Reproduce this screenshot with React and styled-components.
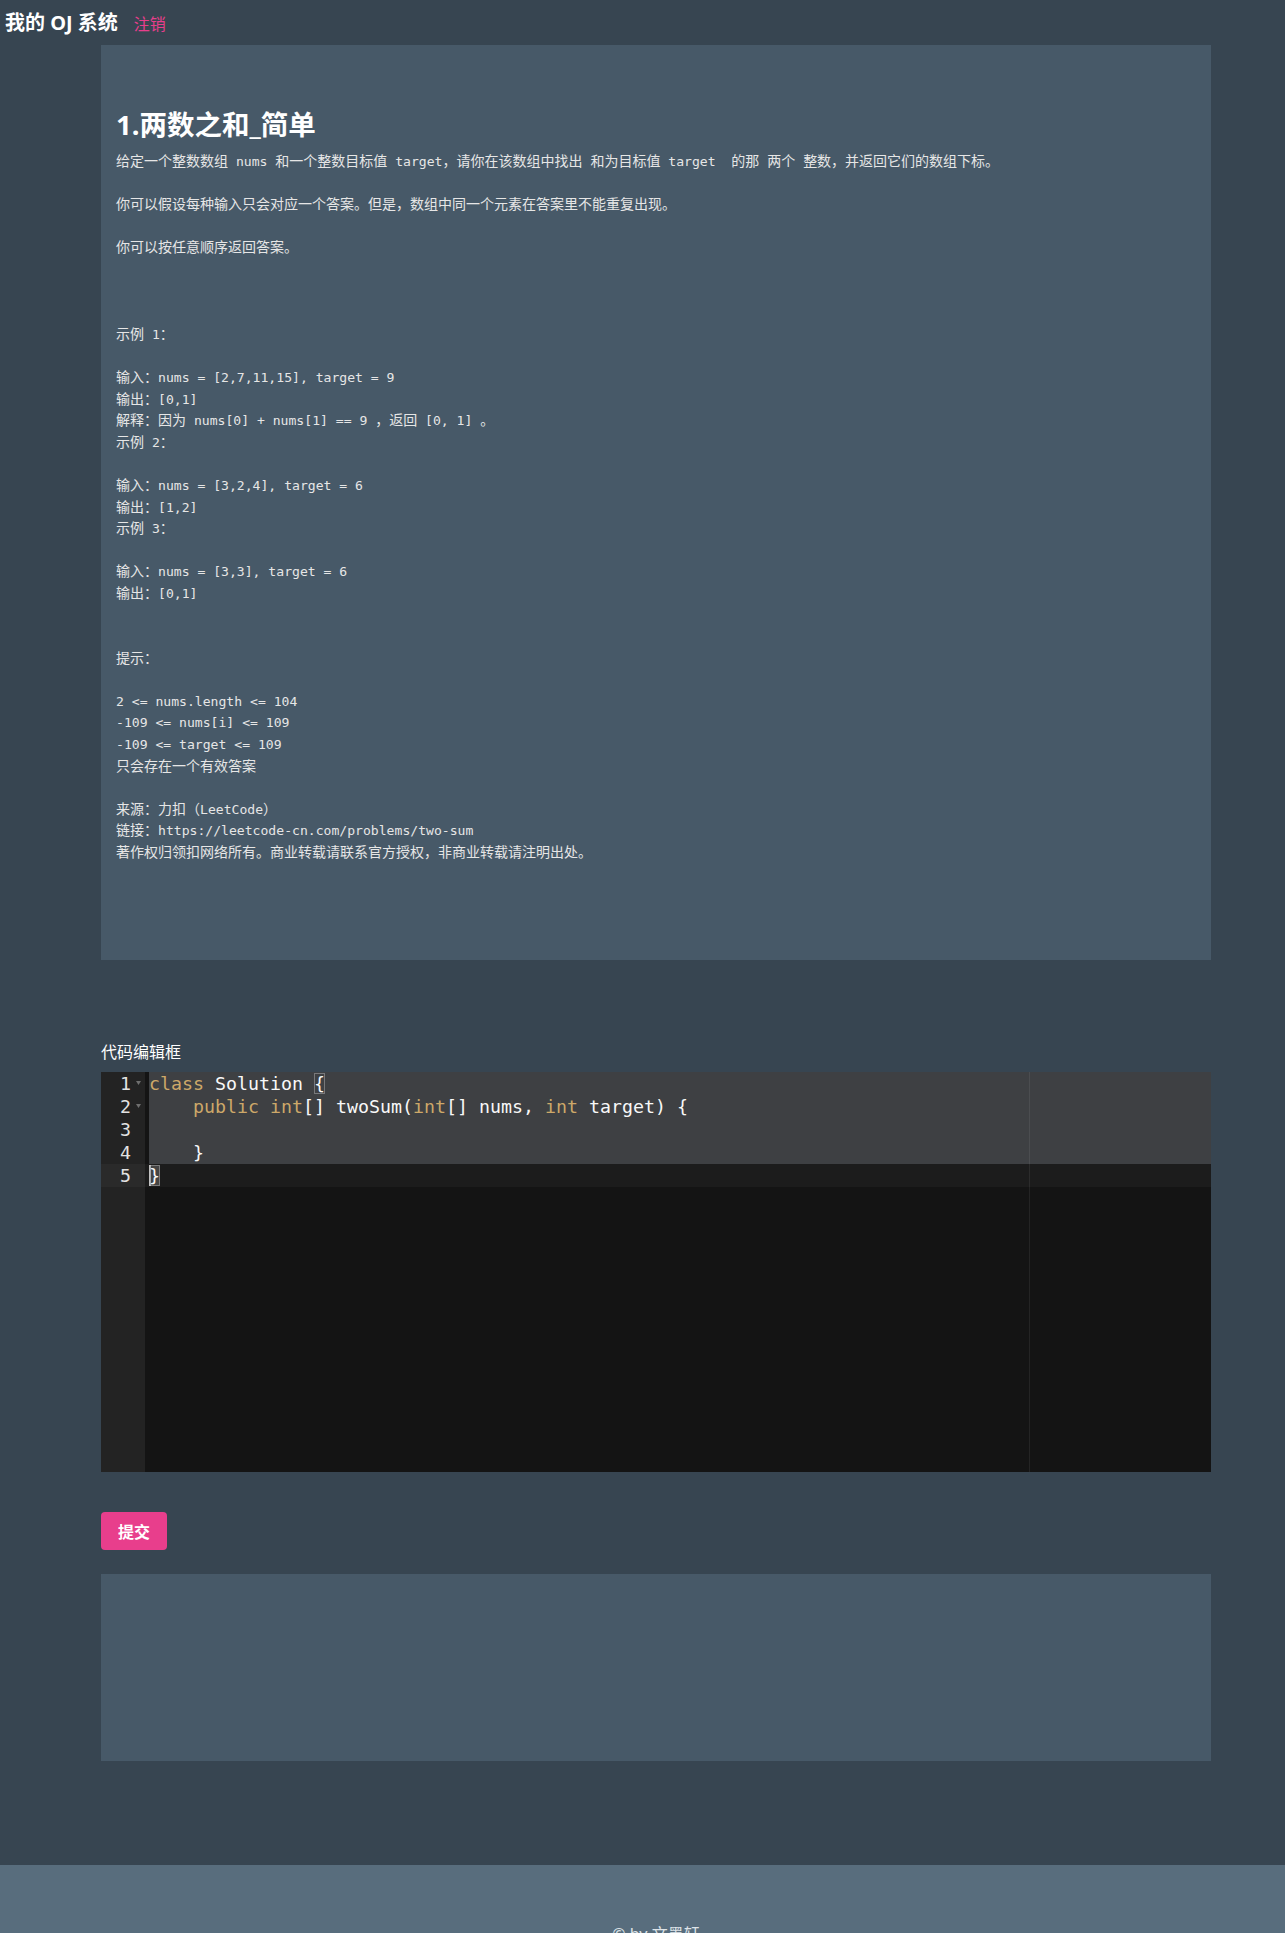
import React from "react";
import styled, { createGlobalStyle } from "styled-components";

const GlobalStyle = createGlobalStyle`
  body {
    margin: 0;
    background: #374551;
    font-family: "Noto Sans", "Noto Sans CJK SC", sans-serif;
  }
`;

const problemText = `给定一个整数数组 nums 和一个整数目标值 target，请你在该数组中找出 和为目标值 target  的那 两个 整数，并返回它们的数组下标。

你可以假设每种输入只会对应一个答案。但是，数组中同一个元素在答案里不能重复出现。

你可以按任意顺序返回答案。



示例 1：

输入：nums = [2,7,11,15], target = 9
输出：[0,1]
解释：因为 nums[0] + nums[1] == 9 ，返回 [0, 1] 。
示例 2：

输入：nums = [3,2,4], target = 6
输出：[1,2]
示例 3：

输入：nums = [3,3], target = 6
输出：[0,1]


提示：

2 <= nums.length <= 104
-109 <= nums[i] <= 109
-109 <= target <= 109
只会存在一个有效答案

来源：力扣（LeetCode）
链接：https://leetcode-cn.com/problems/two-sum
著作权归领扣网络所有。商业转载请联系官方授权，非商业转载请注明出处。`;

const codeLines = [
  [["kw", "class"], ["tx", " Solution "], ["br", "{"]],
  [["tx", "    "], ["kw", "public"], ["tx", " "], ["kw", "int"], ["tx", "[] twoSum("], ["kw", "int"], ["tx", "[] nums, "], ["kw", "int"], ["tx", " target) {"]],
  [],
  [["tx", "    }"]],
  [["cur", "}"]],
];

const Nav = styled.header`
  height: 45px;
  display: flex;
  align-items: center;
  gap: 16px;
  padding: 0 5px;
`;

const Brand = styled.h1`
  margin: 0;
  font-size: 20px;
  font-weight: 700;
  line-height: 1;
  color: #fff;
`;

const Logout = styled.a`
  color: #e83e8c;
  font-size: 16px;
  text-decoration: none;
`;

const Main = styled.main`
  width: 1110px;
  margin-left: 101px;
`;

const Panel = styled.section`
  background: #475968;
  padding: ${(p) => (p.empty ? "0" : "61px 15px 97px")};
  height: ${(p) => (p.empty ? "187px" : "auto")};
  margin-top: ${(p) => (p.empty ? "24px" : "0")};
`;

const Title = styled.h2`
  margin: 0 0 6px;
  font-size: 27.5px;
  font-weight: 700;
  line-height: 38px;
  color: #fff;
`;

const Desc = styled.div`
  color: #e6e6e6;
  font-size: 14px;
`;

const DescLine = styled.div`
  height: 21.6px;
  line-height: 21.6px;
  white-space: pre;
`;

const Mono = styled.span`
  font-family: "DejaVu Sans Mono", monospace;
  font-size: 13.1px;
  line-height: 1;
`;

const Label = styled.div`
  margin: 80px 0 8px;
  line-height: 24px;
  font-size: 16px;
  color: #fff;
`;

const Editor = styled.div`
  display: flex;
  height: 400px;
  background: #141414;
  font-family: "DejaVu Sans Mono", monospace;
  font-size: 18.27px;
  line-height: 23px;
`;

const Gutter = styled.div`
  width: 44px;
  background: #232323;
  color: #e2e2e2;
`;

const GutterCell = styled.div`
  display: flex;
  justify-content: flex-end;
  align-items: center;
  height: 23px;
  padding-right: 4px;
  background: ${(p) => (p.active ? "#2a2a2a" : "transparent")};
`;

const Fold = styled.span`
  width: 5px;
  margin-left: 5px;
  display: flex;
  justify-content: center;
`;

const Content = styled.div`
  flex: 1;
  position: relative;
`;

const PrintMargin = styled.div`
  position: absolute;
  top: 0;
  bottom: 0;
  left: 884px;
  width: 1px;
  background: rgba(255, 255, 255, 0.07);
  z-index: 1;
`;

const CodeLine = styled.div`
  height: 23px;
  padding-left: 4px;
  white-space: pre;
  color: #f8f8f8;
  background: ${(p) =>
    p.selected
      ? "linear-gradient(to right, transparent 4px, #3e4043 4px)"
      : p.active
      ? "#1c1c1c"
      : "transparent"};
`;

const Tok = styled.span`
  color: ${(p) => (p.kind === "kw" ? "#cda869" : "#f8f8f8")};
  ${(p) =>
    p.kind === "br" &&
    "outline: 1px solid rgba(255,255,255,0.3); outline-offset: -1px;"}
  ${(p) =>
    p.kind === "cur" &&
    "background: rgba(255,255,255,0.18); outline: 1px solid rgba(255,255,255,0.3); outline-offset: -1px; box-shadow: inset 2px 0 0 #a7a7a7;"}
`;

const SubmitButton = styled.button`
  display: block;
  margin-top: 40px;
  width: 66px;
  height: 38px;
  border: none;
  border-radius: 4px;
  background: #e83e8c;
  color: #fff;
  font-family: "Noto Sans", "Noto Sans CJK SC", sans-serif;
  font-size: 16px;
  font-weight: 700;
  cursor: pointer;
`;

const Footer = styled.footer`
  margin-top: 104px;
  background: #586d7d;
  padding: 57px 0 40px 27px;
  text-align: center;
  color: #dde3e8;
  font-size: 16px;
  line-height: 24px;
`;

const mixed = (line) =>
  line
    .split(/([\x20-\x7e]+)/)
    .filter(Boolean)
    .map((part, i) =>
      /^[\x20-\x7e]+$/.test(part) ? <Mono key={i}>{part}</Mono> : part
    );

const FoldArrow = () => (
  <svg width="5" height="4" viewBox="0 0 5 4">
    <path d="M0 0 L5 0 L2.5 4 Z" fill="#6f6f6f" />
  </svg>
);

export default function App() {
  return (
    <>
      <GlobalStyle />
      <Nav>
        <Brand>我的 OJ 系统</Brand>
        <Logout href="#">注销</Logout>
      </Nav>
      <Main>
        <Panel>
          <Title>1.两数之和_简单</Title>
          <Desc>
            {problemText.split("\n").map((line, i) => (
              <DescLine key={i}>{mixed(line)}</DescLine>
            ))}
          </Desc>
        </Panel>

        <Label>代码编辑框</Label>
        <Editor>
          <Gutter>
            {codeLines.map((_, i) => (
              <GutterCell key={i} active={i === 4}>
                {i + 1}
                <Fold>{i < 2 && <FoldArrow />}</Fold>
              </GutterCell>
            ))}
          </Gutter>
          <Content>
            {codeLines.map((toks, i) => (
              <CodeLine key={i} selected={i < 4} active={i === 4}>
                {toks.map(([kind, text], j) => (
                  <Tok key={j} kind={kind}>
                    {text}
                  </Tok>
                ))}
              </CodeLine>
            ))}
            <PrintMargin />
          </Content>
        </Editor>

        <SubmitButton>提交</SubmitButton>
        <Panel empty />
      </Main>
      <Footer>© by 文墨轩</Footer>
    </>
  );
}
